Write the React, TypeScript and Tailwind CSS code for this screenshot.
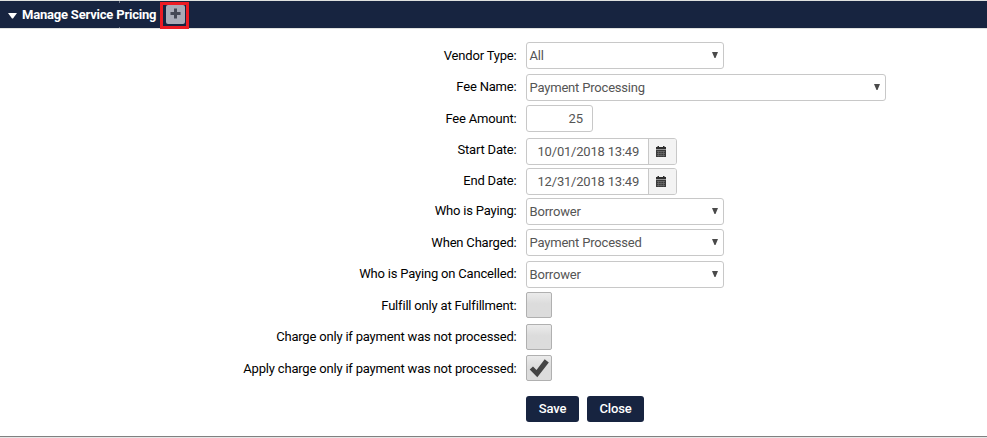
import React from 'react';

function Row({ label, className, labelClass, children }: { label: string; className: string; labelClass: string; children: React.ReactNode }) {
  return (
    <div className={`flex items-start ${className}`}>
      <div className={`w-[516.5px] shrink-0 text-right leading-5 tracking-[-0.19px] text-black ${labelClass}`}>{label}</div>
      <div className="ml-[9.5px] flex">{children}</div>
    </div>
  );
}

function Select({ value, width = 'w-[198px]' }: { value: string; width?: string }) {
  return (
    <div className={`flex h-[27px] items-start justify-between rounded-[3px] border border-[#c8c8c8] bg-white pl-[2.5px] pr-[5px] leading-5 tracking-[-0.19px] text-[#555] ${width}`}>
      <span className="pt-[3px]">{value}</span>
      <svg className="mt-[9px]" width="6" height="6" viewBox="0 0 6 6">
        <path d="M0 0H6L3.5 6H2.5Z" fill="#4a4a4a" />
      </svg>
    </div>
  );
}

function DateField({ value }: { value: string }) {
  return (
    <div className="flex h-[27px] w-[151px] overflow-hidden rounded-[3px] border border-[#c8c8c8]">
      <div className="w-[122px] shrink-0 border-r border-[#c8c8c8] pt-[3px] pl-[10.5px] leading-5 tracking-[-0.2px] whitespace-nowrap text-[#555]">{value}</div>
      <div className="flex flex-1 items-start bg-[#f3f3f3] pt-[7px] pl-[7px]">
        <svg width="10" height="11" viewBox="0 0 10 11">
          <path d="M1.500 0h1.500v1h4V0h1.500v1H10v2H0V1h1.500z" fill="#2e2e2e" />
          <path d="M0 3.500h10V11H0z" fill="#3a3a3a" />
          <path d="M1 5.500h8M1 7.500h8M1 9.500h8" stroke="#888" strokeWidth=".5" />
          <path d="M2.500 5v5.500M5 5v5.500M7.500 5v5.500" stroke="#777" strokeWidth=".5" />
        </svg>
      </div>
    </div>
  );
}

function Checkbox({ checked = false }: { checked?: boolean }) {
  return (
    <div className="h-[26px] w-[26px] rounded-[2px] border border-[#b0b0b0] bg-linear-to-b from-[#ebebeb] from-0% via-[#dcdcdc] via-45% to-[#dcdcdc]">
      {checked && (
        <svg width="24" height="24" viewBox="0 0 24 24">
          <path d="M2.700 13.500L6 10.500L9.500 14L17.700 3.200L21.800 6.500L10.300 21.300Z" fill="#444" />
        </svg>
      )}
    </div>
  );
}

export default function App() {
  return (
    <div className="flex h-[438px] w-[987px] flex-col overflow-hidden bg-white font-['Roboto',sans-serif] text-[13px]">
      <header className="relative flex h-[29px] shrink-0 items-start border-y border-[#dfe1df] bg-[#172440]">
        <span className="absolute top-0 left-[119px] h-[2px] w-px bg-[#6f7788]" />
        <span className="absolute bottom-0 left-[119px] h-px w-px bg-[#6f7788]" />
        <svg className="mt-[12px] ml-[8px]" width="9" height="6" viewBox="0 0 9 6">
          <path d="M0 0H9L5 5.500H4Z" fill="#fff" />
        </svg>
        <h1 className="mt-[4px] ml-[5px] w-[138px] leading-5 font-bold tracking-[-0.2px] whitespace-nowrap text-white">Manage Service Pricing</h1>
        <button className="z-10 mt-px flex h-[27px] w-[29px] shrink-0 items-start border-[3px] border-[#ed1c24] bg-[#172440] pl-[3px]">
          <span className="flex h-[19px] w-[19px] items-start justify-center rounded-[2px] bg-[#a9acb8] pt-[3px]">
            <svg width="11" height="11" viewBox="0 0 11 11">
              <path d="M4 .5h3V4h3.500v3H7v3.500H4V7H.5V4H4z" fill="#454956" />
            </svg>
          </span>
        </button>
      </header>
      <main className="flex-1">
        <Row label="Vendor Type:" className="mt-[13px] h-[32px]" labelClass="pt-[4px]"><Select value="All" /></Row>
        <Row label="Fee Name:" className="h-[31px]" labelClass="pt-[3px]"><Select value="Payment Processing" width="w-[360px]" /></Row>
        <Row label="Fee Amount:" className="h-[33px]" labelClass="pt-[4px]">
          <div className="h-[27px] w-[67px] rounded-[3px] border border-[#c8c8c8] pt-[3px] pr-[9px] text-right leading-5 text-[#555]">25</div>
        </Row>
        <Row label="Start Date:" className="h-[30px]" labelClass="pt-[2px]"><DateField value="10/01/2018 13:49" /></Row>
        <Row label="End Date:" className="h-[30px]" labelClass="pt-[3px]"><DateField value="12/31/2018 13:49" /></Row>
        <Row label="Who is Paying:" className="h-[31px]" labelClass="pt-[3px]"><Select value="Borrower" /></Row>
        <Row label="When Charged:" className="h-[32px]" labelClass="pt-[4px]"><Select value="Payment Processed" /></Row>
        <Row label="Who is Paying on Cancelled:" className="h-[31px]" labelClass="pt-[3px]"><Select value="Borrower" /></Row>
        <Row label="Fulfill only at Fulfillment:" className="h-[32px]" labelClass="pt-[4px]"><Checkbox /></Row>
        <Row label="Charge only if payment was not processed:" className="h-[31px]" labelClass="pt-[3px]"><Checkbox /></Row>
        <Row label="Apply charge only if payment was not processed:" className="h-[41px]" labelClass="pt-[4px]"><Checkbox checked /></Row>
        <div className="ml-[526px] flex gap-2 font-medium text-white">
          <button className="h-[26px] w-[53px] rounded-[3px] bg-[#172440] leading-5 tracking-[-0.1px]">Save</button>
          <button className="h-[26px] w-[57px] rounded-[3px] bg-[#172440] leading-5 tracking-[-0.2px]">Close</button>
        </div>
      </main>
      <footer className="h-[2px] shrink-0 border-t border-[#808080] bg-[#e6e6e6]" />
    </div>
  );
}
